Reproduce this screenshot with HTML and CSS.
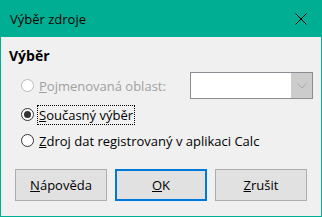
FILE: index.html
```html
<!DOCTYPE html>
<html lang="cs">
<head>
    <meta charset="UTF-8">
    <title>Výběr zdroje</title>
    <link rel="stylesheet" href="styles.css">
</head>
<body>
    <div class="window">
        <div class="titlebar">
            <span class="title">Výběr zdroje</span>
            <svg class="close" width="12" height="12" viewBox="0 0 12 12">
                <path d="M0.5 0.5 L11.5 11.5 M11.5 0.5 L0.5 11.5" stroke="#000" stroke-width="1" fill="none"/>
            </svg>
        </div>

        <div class="content">
            <div class="section-title">Výběr</div>

            <div class="options">
                <div class="option disabled">
                    <span class="radio"></span>
                    <span class="label"><u>P</u>ojmenovaná oblast:</span>
                    <div class="combo">
                        <div class="combo-field"></div>
                        <div class="combo-btn">
                            <svg width="10" height="6" viewBox="0 0 10 6">
                                <path d="M0.5 0.5 L5 5 L9.5 0.5" stroke="#a8a8a8" stroke-width="1" fill="none"/>
                            </svg>
                        </div>
                    </div>
                </div>
                <div class="option">
                    <span class="radio checked"></span>
                    <span class="label focused"><u>S</u>oučasný výběr</span>
                </div>
                <div class="option">
                    <span class="radio"></span>
                    <span class="label"><u>Z</u>droj dat registrovaný v aplikaci Calc</span>
                </div>
            </div>

            <div class="buttons">
                <button class="btn"><u>N</u>ápověda</button>
                <button class="btn default"><u>O</u>K</button>
                <button class="btn"><u>Z</u>rušit</button>
            </div>
        </div>
    </div>
</body>
</html>
```

FILE: styles.css
```css
* {
    box-sizing: border-box;
    margin: 0;
    padding: 0;
}

body {
    font-family: "Open Sans", "Noto Sans", sans-serif;
    font-size: 13px;
    color: #000;
    background-color: #f0f0f0;
}

.window {
    width: 322px;
    height: 217px;
    display: flex;
    flex-direction: column;
    border: 1px solid #00af93;
    border-top: none;
    background-color: #f0f0f0;
}

.titlebar {
    height: 37px;
    margin: 0 -1px;
    background-color: #00af93;
    display: flex;
    align-items: center;
    justify-content: space-between;
    padding: 0 15px 0 10px;
}

.title {
    font-size: 13px;
    color: #000;
}

.content {
    flex: 1;
    padding: 9px 8px 0 8px;
    display: flex;
    flex-direction: column;
}

.section-title {
    font-weight: bold;
    font-size: 14px;
    line-height: 19px;
}

.options {
    display: flex;
    flex-direction: column;
    gap: 5px;
    margin-top: 7px;
    padding-left: 12px;
}

.option {
    display: flex;
    align-items: center;
    min-height: 21px;
}

.radio {
    width: 13px;
    height: 13px;
    border-radius: 50%;
    border: 1px solid #333;
    background-color: #fff;
    display: flex;
    align-items: center;
    justify-content: center;
    flex-shrink: 0;
}

.radio.checked::after {
    content: "";
    width: 7px;
    height: 7px;
    border-radius: 50%;
    background-color: #333;
}

.label {
    margin-left: 3px;
    padding: 0 1px;
    line-height: 18px;
    border: 1px solid transparent;
}

.label.focused {
    border: 1px dotted #000;
}

.option.disabled .radio {
    border-color: #bcbcbc;
}

.option.disabled .label {
    color: #a0a0a0;
}

.combo {
    margin-left: auto;
    width: 123px;
    height: 27px;
    display: flex;
    border: 1px solid #8a8d92;
    background-color: #fff;
}

.combo-field {
    flex: 1;
}

.combo-btn {
    width: 21px;
    background-color: #cccccc;
    display: flex;
    align-items: center;
    justify-content: center;
}

.buttons {
    display: flex;
    gap: 8px;
    margin-top: 18px;
    padding-left: 6px;
}

.btn {
    width: 92px;
    height: 32px;
    font-family: inherit;
    font-size: 13px;
    color: #000;
    background-color: #e1e1e1;
    border: 1px solid #adadad;
}

.btn.default {
    border: 2px solid #0078d7;
}
```
